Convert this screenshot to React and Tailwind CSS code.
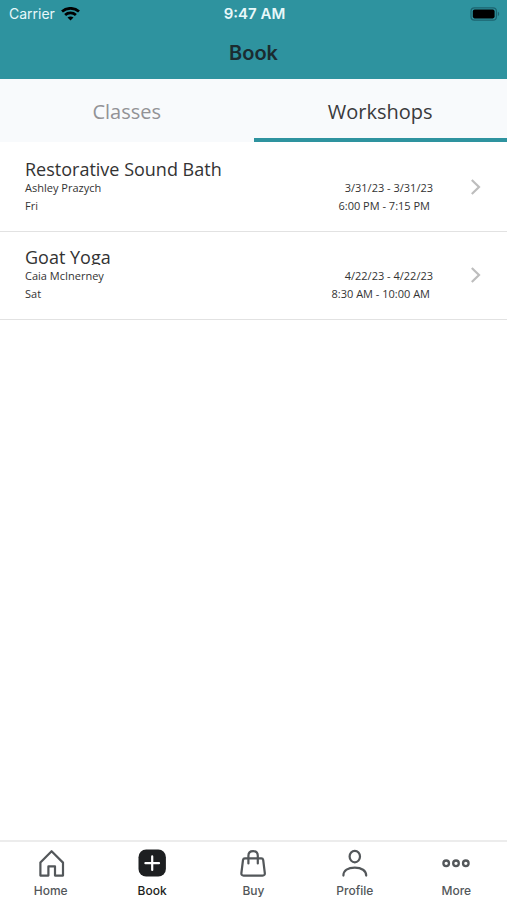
import { useState } from 'react';

const tabs = ['Classes', 'Workshops'];

const workshops = [
    { id: 1, name: 'Restorative Sound Bath', teacher: 'Ashley Prazych', day: 'Fri', dates: '3/31/23 - 3/31/23', time: '6:00 PM - 7:15 PM' },
    { id: 2, name: 'Goat Yoga', teacher: 'Caia McInerney', day: 'Sat', dates: '4/22/23 - 4/22/23', time: '8:30 AM - 10:00 AM' },
];

const WifiIcon = () => (
    <svg width="19" height="14" viewBox="0 0 19 14" aria-hidden="true">
        <g fill="none" stroke="#000" strokeWidth="2.7">
            <path d="M1 4.6C5.8 0.2 13.2 0.2 18 4.6" />
            <path d="M4.1 8C7.1 5.2 11.9 5.2 14.9 8" />
        </g>
        <path d="M9.5 13.6L6.5 10.6C8.2 9.1 10.8 9.1 12.5 10.6Z" fill="#000" />
    </svg>
);

const BatteryIcon = () => (
    <svg width="30" height="14" viewBox="0 0 30 14" aria-hidden="true">
        <rect x="1" y="0.8" width="25.4" height="12.4" rx="3.4" fill="none" stroke="#1c6470" strokeWidth="1.2" />
        <rect x="2.8" y="2.6" width="21.8" height="8.8" rx="1.8" fill="#000" />
        <path d="M27.8 4.8C29.6 5.4 29.6 8.6 27.8 9.2Z" fill="#1c6470" />
    </svg>
);

const HomeIcon = () => (
    <svg width="28" height="28" viewBox="0 0 28 28" fill="none" stroke="currentColor" strokeWidth="2.2" strokeLinejoin="round" aria-hidden="true">
        <path d="M14.6 2.2L26 13.6V26.6H18V17.4H11.4V26.6H3.4V13.6Z" />
    </svg>
);

const BookIcon = () => (
    <svg width="28" height="28" viewBox="0 0 28 28" aria-hidden="true">
        <rect x="0.5" y="0.6" width="27.4" height="27" rx="7.6" fill="currentColor" />
        <path d="M14.2 7.4V21M7.4 14.2H21" stroke="#fff" strokeWidth="2.2" strokeLinecap="round" />
    </svg>
);

const BuyIcon = () => (
    <svg width="28" height="28" viewBox="0 0 28 28" fill="none" stroke="currentColor" strokeWidth="2.2" strokeLinecap="round" strokeLinejoin="round" aria-hidden="true">
        <path d="M5.8 9.4H22.4C23.4 9.4 24 10 24.2 11L25.8 24C26 25.6 25.2 26.6 23.6 26.6H4.6C3 26.6 2.2 25.6 2.4 24L4 11C4.2 10 4.8 9.4 5.8 9.4Z" />
        <path d="M9.4 14.4V6.8C9.4 3.8 11.3 2.1 14.1 2.1C16.9 2.1 18.8 3.8 18.8 6.8V14.4" />
    </svg>
);

const ProfileIcon = () => (
    <svg width="28" height="28" viewBox="0 0 28 28" fill="none" stroke="currentColor" strokeWidth="2.2" strokeLinecap="round" aria-hidden="true">
        <ellipse cx="13.8" cy="7.6" rx="5.2" ry="5.7" />
        <path d="M2.4 26.6C2.4 21.6 7 18.6 13.8 18.6C20.6 18.6 25.2 21.6 25.2 26.6" />
    </svg>
);

const MoreIcon = () => (
    <svg width="28" height="28" viewBox="0 0 28 28" fill="none" stroke="currentColor" strokeWidth="2.3" aria-hidden="true">
        <circle cx="4.2" cy="14.3" r="2.8" />
        <circle cx="14" cy="14.3" r="2.8" />
        <circle cx="23.8" cy="14.3" r="2.8" />
    </svg>
);

const navItems = [
    { label: 'Home', icon: HomeIcon },
    { label: 'Book', icon: BookIcon },
    { label: 'Buy', icon: BuyIcon },
    { label: 'Profile', icon: ProfileIcon },
    { label: 'More', icon: MoreIcon },
];

const WorkshopRow = ({ workshop }) => (
    <li className="border-b border-[#e2e2e2]">
        <a href={`#workshop-${workshop.id}`} className="flex items-center pt-[15px] pb-4 pl-[25px] pr-6">
            <div className="flex-1">
                <h2 className="mb-0.5 h-[18px] overflow-hidden text-lg leading-5">{workshop.name}</h2>
                <div className="flex justify-between text-[11px] leading-[18px]">
                    <div>
                        <p>{workshop.teacher}</p>
                        <p>{workshop.day}</p>
                    </div>
                    <div className="text-right">
                        <p>{workshop.dates}</p>
                        <p className="pr-[3px]">{workshop.time}</p>
                    </div>
                </div>
            </div>
            <svg className="ml-9" width="14" height="18" viewBox="0 0 14 18" fill="none" stroke="#bdbdbd" strokeWidth="2.2" aria-hidden="true">
                <path d="M2.8 2L10 9L2.8 16" />
            </svg>
        </a>
    </li>
);

const App = () => {
    const [activeTab, setActiveTab] = useState('Workshops');
    const [activePage, setActivePage] = useState('Book');

    return (
        <div className="flex min-h-screen flex-col bg-white font-['Open_Sans','Noto_Sans',sans-serif] text-[#333333]">
            <header className="bg-[#2e939f] font-['Inter',sans-serif]">
                <div className="grid h-7 grid-cols-3 items-center pl-[9px] pr-[7px] text-sm text-[#e8f8fa]">
                    <div className="flex items-center gap-1.5">
                        Carrier <WifiIcon />
                    </div>
                    <time className="text-center text-[15px] font-semibold">9:47 AM</time>
                    <div className="flex justify-end">
                        <BatteryIcon />
                    </div>
                </div>
                <h1 className="pt-[11px] pb-3 text-center text-xl leading-7 font-semibold text-[#1b2c30]">Book</h1>
            </header>

            {/* Tabs */}
            <div role="tablist" className="grid grid-cols-2 bg-[#f8fafc]">
                {tabs.map(tab => (
                    <button
                        key={tab}
                        role="tab"
                        aria-selected={activeTab === tab}
                        onClick={() => setActiveTab(tab)}
                        className={`border-b-4 pt-[19px] pb-3 text-xl leading-7 ${activeTab === tab ? 'border-[#2e939f] text-[#3a3a3c]' : 'border-transparent text-[#929296]'}`}
                    >
                        {tab}
                    </button>
                ))}
            </div>

            <main className="flex-1 pt-0.5">
                {activeTab === 'Workshops' && (
                    <ul>
                        {workshops.map(w => <WorkshopRow key={w.id} workshop={w} />)}
                    </ul>
                )}
            </main>

            <nav className="grid grid-cols-5 border-t-2 border-[#ececec] font-['Inter',sans-serif]">
                {navItems.map(({ label, icon: Icon }) => (
                    <button
                        key={label}
                        onClick={() => setActivePage(label)}
                        className={`flex flex-col items-center gap-1.5 pt-[7px] pb-px text-xs font-medium ${activePage === label ? 'text-[#1d1f21]' : 'text-[#53575a]'}`}
                    >
                        <Icon />
                        {label}
                    </button>
                ))}
            </nav>
        </div>
    );
};

export default App;
